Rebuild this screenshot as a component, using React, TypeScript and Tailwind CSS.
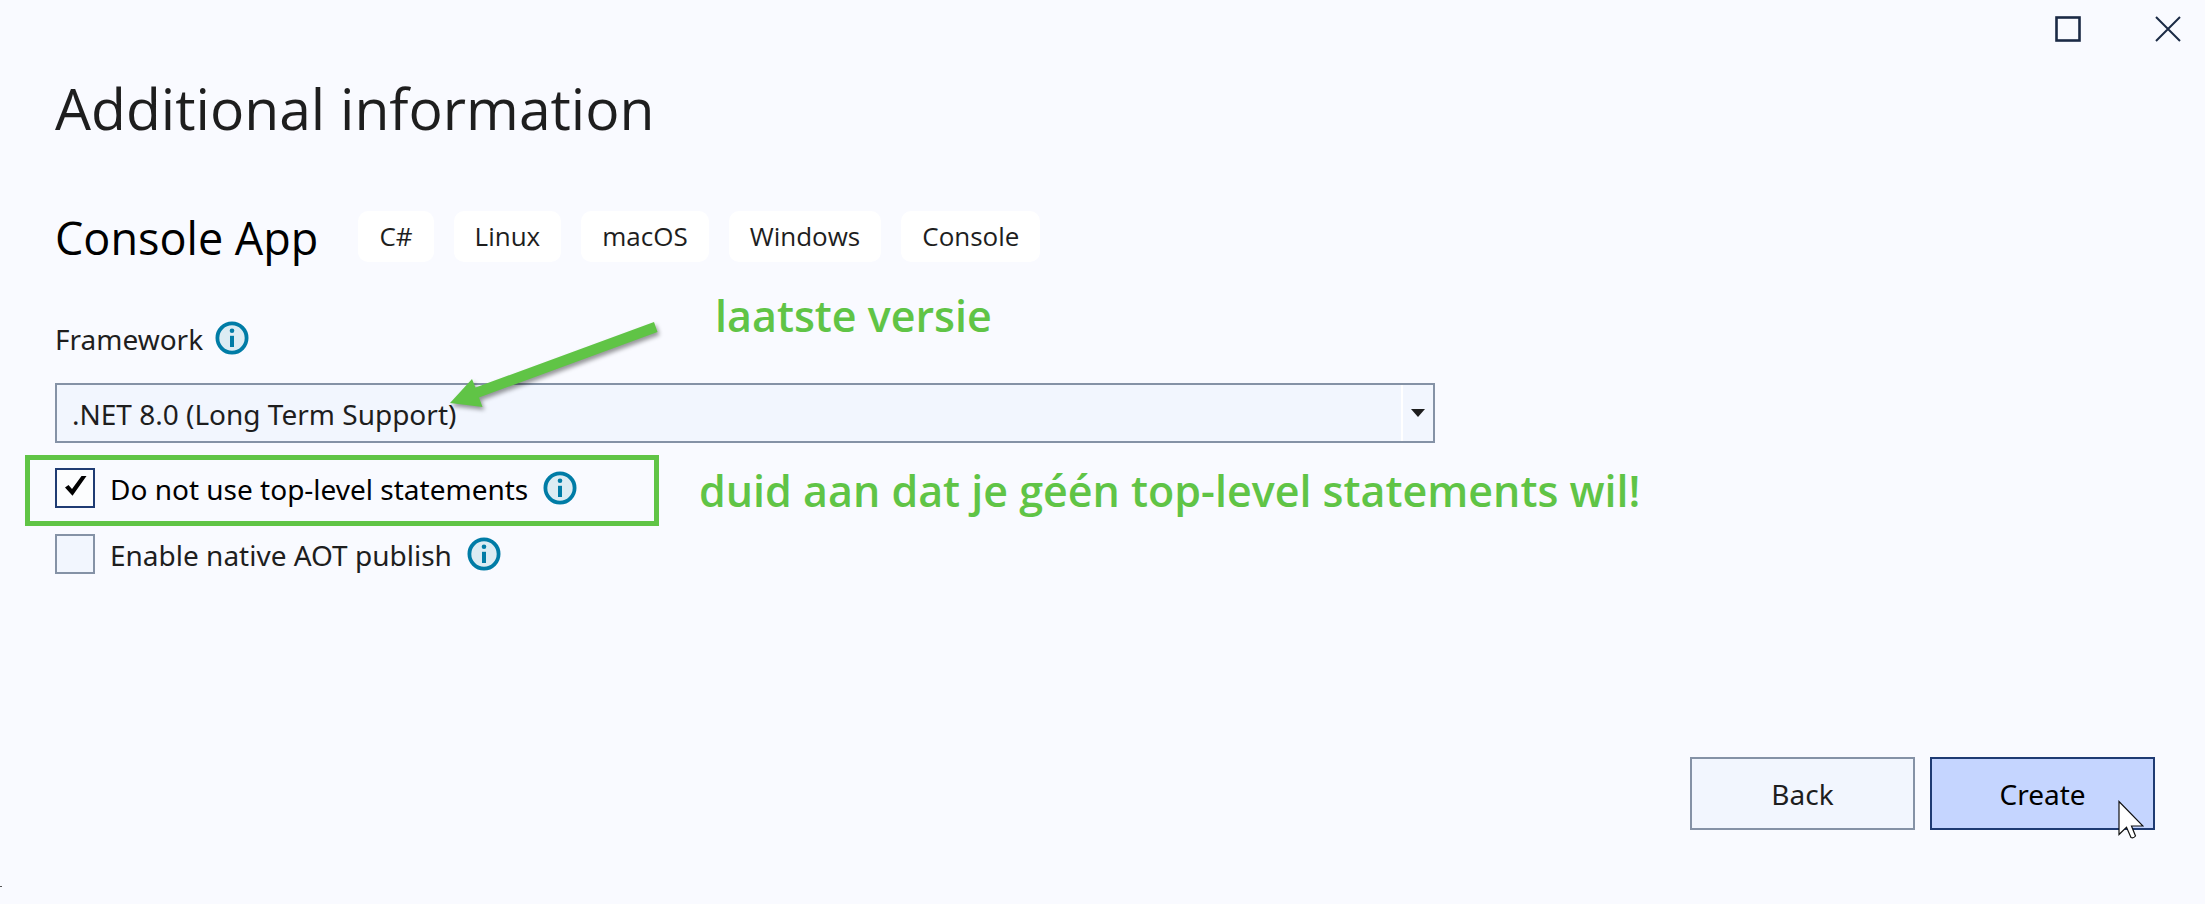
import { useState } from "react";

function InfoIcon() {
  return (
    <svg viewBox="0 0 34 34" className="h-[34px] w-[34px] shrink-0" aria-hidden="true">
      <circle cx="17" cy="17" r="14.6" fill="#dcecf3" stroke="#007ca6" strokeWidth="3.8" />
      <circle cx="17" cy="9.700" r="2.300" fill="#007ca6" />
      <rect x="15" y="14.800" width="4" height="11.200" fill="#007ca6" />
    </svg>
  );
}

function WindowControls() {
  return (
    <div className="flex h-[58px] justify-end gap-[74px] pr-6">
      <button type="button" aria-label="Maximize" className="mt-4 h-[26px] w-[26px]">
        <svg viewBox="0 0 26 26" className="h-full w-full">
          <rect x="1.5" y="1.5" width="23" height="23" fill="none" stroke="#1b2a45" strokeWidth="2.6" />
        </svg>
      </button>
      <button type="button" aria-label="Close" className="mt-4 h-[26px] w-[26px]">
        <svg viewBox="0 0 26 26" className="h-full w-full">
          <path d="M1 1 L25 25 M25 1 L1 25" fill="none" stroke="#1b2a45" strokeWidth="2" />
        </svg>
      </button>
    </div>
  );
}

function Arrow() {
  return (
    <svg
      viewBox="0 0 220 100"
      className="pointer-events-none absolute left-[393px] -top-0.5 z-10 h-[100px] w-[220px] drop-shadow-[2px_3px_2px_rgba(0,0,0,0.4)]"
      aria-hidden="true"
    >
      <path d="M2 87 L24 63 L27.500 71.500 L206 6 L209.500 16 L31 81.500 L34.500 91 Z" fill="#60c446" />
    </svg>
  );
}

type CheckOptionProps = {
  id: string;
  label: string;
  checked: boolean;
  onChange: (value: boolean) => void;
};

function CheckOption({ id, label, checked, onChange }: CheckOptionProps) {
  return (
    <div className="flex items-center">
      <span className="relative h-10 w-10 shrink-0">
        <input
          id={id}
          type="checkbox"
          checked={checked}
          onChange={(e) => onChange(e.target.checked)}
          className="block h-10 w-10 appearance-none border-2 border-[#8592a6] bg-[#f2f6fe] checked:border-[#1f3b73] checked:bg-[#fcfdfe]"
        />
        {checked && (
          <svg viewBox="0 0 40 40" className="pointer-events-none absolute inset-0 h-10 w-10" aria-hidden="true">
            <path d="M10 19.500 L13.500 17 L17 21 L26.500 8 L31.500 8 L17.500 27.800 Z" fill="#000" />
          </svg>
        )}
      </span>
      <label
        htmlFor={id}
        className={checked ? "mx-[15px] pt-0.5 leading-[38px] text-black" : "mx-[15px] pt-0.5 leading-[38px]"}
      >
        {label}
      </label>
      <InfoIcon />
    </div>
  );
}

const tags = ["C#", "Linux", "macOS", "Windows", "Console"];

export default function App() {
  const [noTopLevel, setNoTopLevel] = useState(true);
  const [aot, setAot] = useState(false);

  return (
    <div className="relative flex min-h-screen flex-col overflow-hidden bg-[#f9faff] font-['Noto_Sans',sans-serif] text-[28px] leading-10 text-[#1e1e1e]">
      <WindowControls />
      <main className="flex flex-col pl-[55px] pr-[50px]">
        <h1 className="mt-[14px] font-['Open_Sans',sans-serif] text-[57px] leading-[72px]">Additional information</h1>

        <div className="mt-[62px] flex items-center font-['Open_Sans',sans-serif]">
          <h2 className="mr-10 pt-1 text-[45px] leading-[56px] text-black">Console App</h2>
          <ul className="flex gap-5 text-[26px]">
            {tags.map((tag) => (
              <li key={tag} className="flex h-[51px] items-center rounded-[10px] bg-white px-[21px]">
                {tag}
              </li>
            ))}
          </ul>
        </div>

        <div className="relative mt-[52px] flex items-center">
          <label htmlFor="framework" className="mr-3 pt-0.5 leading-[38px]">
            Framework
          </label>
          <InfoIcon />
          <Arrow />
          <p className="absolute -top-8 left-[660px] font-['Open_Sans',sans-serif] text-[43px] font-semibold leading-[60px] text-[#60c446]">
            laatste versie
          </p>
        </div>

        <div className="relative mt-[25px] w-[1380px] max-w-full">
          <select
            id="framework"
            className="block h-[60px] w-full appearance-none border-2 border-[#8592a6] bg-[#f2f6fe] pl-[15px] pr-10 pt-0.5"
          >
            <option>.NET 8.0 (Long Term Support)</option>
          </select>
          <div className="pointer-events-none absolute inset-y-0.5 right-0.5 flex w-8 items-center justify-center border-l-2 border-white">
            <svg viewBox="0 0 14 8" className="h-2 w-3.5" aria-hidden="true">
              <path d="M0 0 H14 L7 8 Z" fill="#1e1e1e" />
            </svg>
          </div>
        </div>

        <div className="mt-3 flex items-center gap-10">
          <div className="-ml-[30px] h-[71px] w-[634px] shrink-0 border-[5px] border-[#60c446] pl-[25px] pt-2">
            <CheckOption
              id="top-level"
              label="Do not use top-level statements"
              checked={noTopLevel}
              onChange={setNoTopLevel}
            />
          </div>
          <p className="whitespace-nowrap font-['Open_Sans',sans-serif] text-[43px] font-semibold leading-[60px] text-[#60c446]">
            duid aan dat je géén top-level statements wil!
          </p>
        </div>

        <div className="mt-2">
          <CheckOption id="aot" label="Enable native AOT publish" checked={aot} onChange={setAot} />
        </div>
      </main>

      <footer className="mt-auto flex justify-end gap-[15px] pb-[74px] pr-[50px]">
        <button type="button" className="h-[73px] w-[225px] border-2 border-[#8592a6] bg-[#f2f6fe]">
          Back
        </button>
        <div className="relative">
          <button type="button" className="h-[73px] w-[225px] border-2 border-[#1f3b73] bg-[#c5d5ff] text-black">
            Create
          </button>
          <svg
            viewBox="0 0 26 40"
            className="pointer-events-none absolute right-[11px] top-[43px] h-10 w-[26px]"
            aria-hidden="true"
          >
            <path
              d="M1 1.500 V34.500 L8.500 27.200 L13 37.500 Q15.500 38.500 17.500 36 L13.500 26 H25 Z"
              fill="#fff"
              stroke="#111"
              strokeWidth="1.2"
            />
          </svg>
        </div>
      </footer>
      <span className="absolute bottom-[17px] left-0 h-px w-0.5 bg-[#555]" />
    </div>
  );
}
